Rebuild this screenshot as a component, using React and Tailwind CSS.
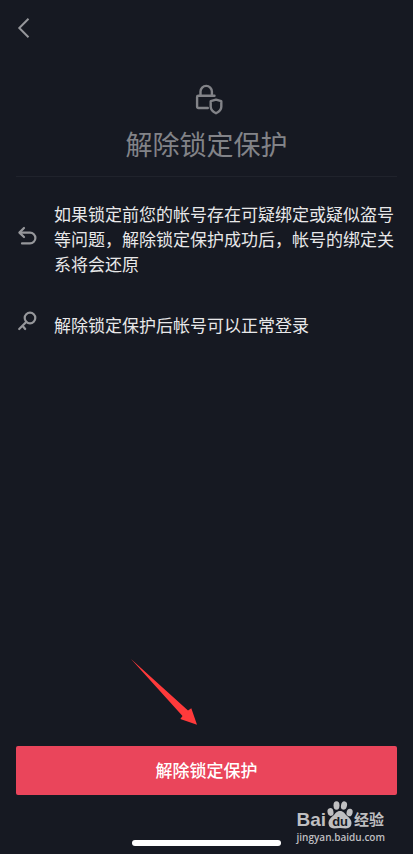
const points = [
  {
    id: "restore",
    text: "如果锁定前您的帐号存在可疑绑定或疑似盗号等问题，解除锁定保护成功后，帐号的绑定关系将会还原",
    icon: UndoIcon,
    spacing: "pt-[22px]",
  },
  {
    id: "login",
    text: "解除锁定保护后帐号可以正常登录",
    icon: KeyIcon,
    spacing: "-mt-1",
  },
];

function BackIcon() {
  return (
    <svg className="size-6" viewBox="0 0 24 24" fill="none" stroke="currentColor" strokeWidth="2" aria-hidden="true">
      <path d="M12.500 2.800 3.300 12l9.200 9.200" />
    </svg>
  );
}

function LockShieldIcon() {
  return (
    <svg className="size-8" viewBox="0 0 32 32" fill="none" stroke="currentColor" strokeWidth="2.400" strokeLinecap="round" strokeLinejoin="round" aria-hidden="true">
      <path d="M9.500 11.500V7.600a5.700 5.700 0 0 1 11.400 0v3.900" />
      <path d="M23.500 11.700H7.300a1.200 1.200 0 0 0-1.200 1.200v9.900A1.200 1.200 0 0 0 7.300 24h9.500" />
      <path d="m25 15.600 5.300 1.600v5.500c0 3-2.200 5-5.300 6.600-3.100-1.600-5.300-3.600-5.300-6.600v-5.500z" />
    </svg>
  );
}

function UndoIcon() {
  return (
    <svg className="size-[22px]" viewBox="0 0 22 22" fill="none" stroke="currentColor" strokeWidth="2.200" strokeLinecap="round" strokeLinejoin="round" aria-hidden="true">
      <path d="M8 3 3.400 7.600 8 12" />
      <path d="M4 7.600h10a5.400 5.400 0 0 1 0 10.800H6" />
    </svg>
  );
}

function KeyIcon() {
  return (
    <svg className="size-[22px]" viewBox="0 0 22 22" fill="none" stroke="currentColor" strokeWidth="2.200" strokeLinecap="round" strokeLinejoin="round" aria-hidden="true">
      <circle cx="14" cy="8" r="5.300" />
      <path d="M10.200 11.900 3.200 19M6.500 15.800l2.700 3.200" />
    </svg>
  );
}

function PawIcon() {
  return (
    <svg className="h-8 w-7" viewBox="0 0 28 32" fill="currentColor" aria-hidden="true">
      <ellipse cx="4.500" cy="14" rx="3" ry="3.900" transform="rotate(-12 4.500 14)" />
      <ellipse cx="10.500" cy="7.500" rx="3" ry="4.200" />
      <ellipse cx="18" cy="7.500" rx="3" ry="4.200" transform="rotate(12 18 7.500)" />
      <ellipse cx="23.600" cy="14.500" rx="3" ry="3.800" transform="rotate(14 23.600 14.500)" />
      <path d="M14 13c3.400 0 4.700 2.700 6.900 4.800 2.400 2.200 4.600 3.900 4.600 7 0 3.600-2.300 5.700-5.600 5.700-2.100 0-3.900-.4-5.900-.4s-3.800.4-5.900.4c-3.300 0-5.600-2.100-5.600-5.700 0-3.100 2.200-4.800 4.600-7C9.300 15.700 10.600 13 14 13z" />
    </svg>
  );
}

function Watermark() {
  return (
    <div className="absolute right-7 bottom-[11px] flex flex-col items-start gap-px font-bold text-[#bfbfc1]">
      <div className="flex h-8 items-end">
        <span className="text-[19px] leading-5">Bai</span>
        <span className="relative block h-8">
          <PawIcon />
          <span className="absolute inset-x-0 bottom-0 text-center text-[13px] leading-4 text-[#161922]">du</span>
        </span>
        <span className="text-[15px] leading-5">经验</span>
      </div>
      <span className="font-['Open_Sans',sans-serif] text-[10px] leading-3 font-semibold">jingyan.baidu.com</span>
    </div>
  );
}

export default function App() {
  return (
    <main className="relative flex min-h-screen flex-col bg-[#161922] font-['Liberation_Sans','Noto_Sans_CJK_SC',sans-serif] text-[#e8e8e9]">
      <header className="flex h-14 items-center px-4">
        <button type="button" aria-label="返回" className="text-[#96979b]">
          <BackIcon />
        </button>
      </header>

      <section className="mx-4 flex flex-col items-center border-b border-[#20232c] pt-7 pb-2.5 text-[#828388]">
        <LockShieldIcon />
        <h1 className="mt-2.5 text-[27px] leading-10 font-normal">解除锁定保护</h1>
      </section>

      <ul className="flex flex-col gap-9 px-4 pt-[26px]">
        {points.map(({ id, text, icon: Icon, spacing }) => (
          <li key={id} className="flex items-start gap-4">
            <span className={`shrink-0 text-[#96979b] ${spacing}`}>
              <Icon />
            </span>
            <p className="text-[17px] leading-[25px]">{text}</p>
          </li>
        ))}
      </ul>

      <footer className="relative mt-auto px-4 pb-2">
        <svg className="absolute bottom-32 left-32 size-18" viewBox="0 0 72 72" fill="#ff3a3b" aria-hidden="true">
          <path d="M3 5 60 56.500 63.300 54.300 69 70.700 52.300 65 54.500 62z" />
        </svg>
        <button type="button" className="h-[49px] w-full rounded-xs bg-[#ea455b] pt-0.5 text-[17px] font-medium text-white">
          解除锁定保护
        </button>
        <div className="mx-auto mt-[45px] h-[6px] w-[149px] rounded-full bg-white" />
      </footer>
      <Watermark />
    </main>
  );
}
